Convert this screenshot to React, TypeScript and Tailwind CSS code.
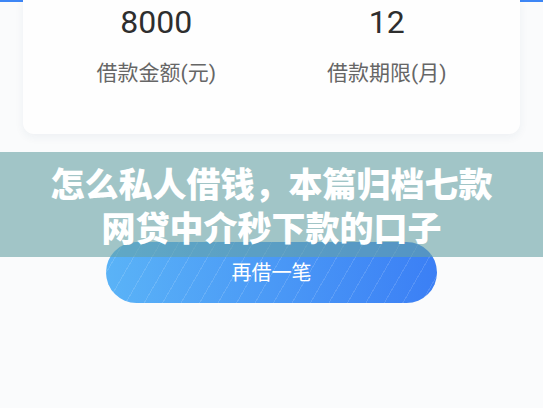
const cjk = "font-['Roboto','Noto_Sans_CJK_SC',sans-serif]";

const stats = [
  { value: "8000", label: "借款金额(元)" },
  { value: "12", label: "借款期限(月)" },
];

export default function App() {
  return (
    <div className={`relative w-[543px] h-[408px] overflow-hidden bg-[#fafbfc] ${cjk}`}>
      {/* blue header peeking out behind the summary card */}
      <div className="h-[2px] bg-[#3d86f5]" />

      {/* loan summary card */}
      <div className="relative -mt-[2px] mx-[23px] h-[134px] rounded-b-[11px] bg-[#fefefe] shadow-[0_3px_10px_rgba(40,60,100,0.06)] grid grid-cols-2 px-[18px]">
        {stats.map((s) => (
          <div key={s.label} className="flex flex-col items-center">
            <div className="pt-[2px] text-[32px] leading-[40px] text-[#2e2e2e]">{s.value}</div>
            <div className="mt-[17px] text-[21px] leading-[28px] text-[#666666]">{s.label}</div>
          </div>
        ))}
      </div>

      {/* borrow again */}
      <button className="mt-[108px] mx-auto flex items-center justify-center w-[331px] h-[61px] rounded-full bg-[repeating-linear-gradient(120deg,transparent_0,transparent_15px,rgba(255,255,255,0.13)_15px,rgba(255,255,255,0.13)_16px),linear-gradient(to_right,#5ab3f7,#3b7ff5)] text-white text-[20px] leading-none">
        再借一笔
      </button>

      {/* article title banner */}
      <div className="absolute left-0 right-0 top-[152px] h-[105px] bg-[rgba(101,162,163,0.6)] pt-[11px] text-center text-white text-[34px] leading-[44px] font-black">
        怎么私人借钱，本篇归档七款
        <br />
        网贷中介秒下款的口子
      </div>
    </div>
  );
}
